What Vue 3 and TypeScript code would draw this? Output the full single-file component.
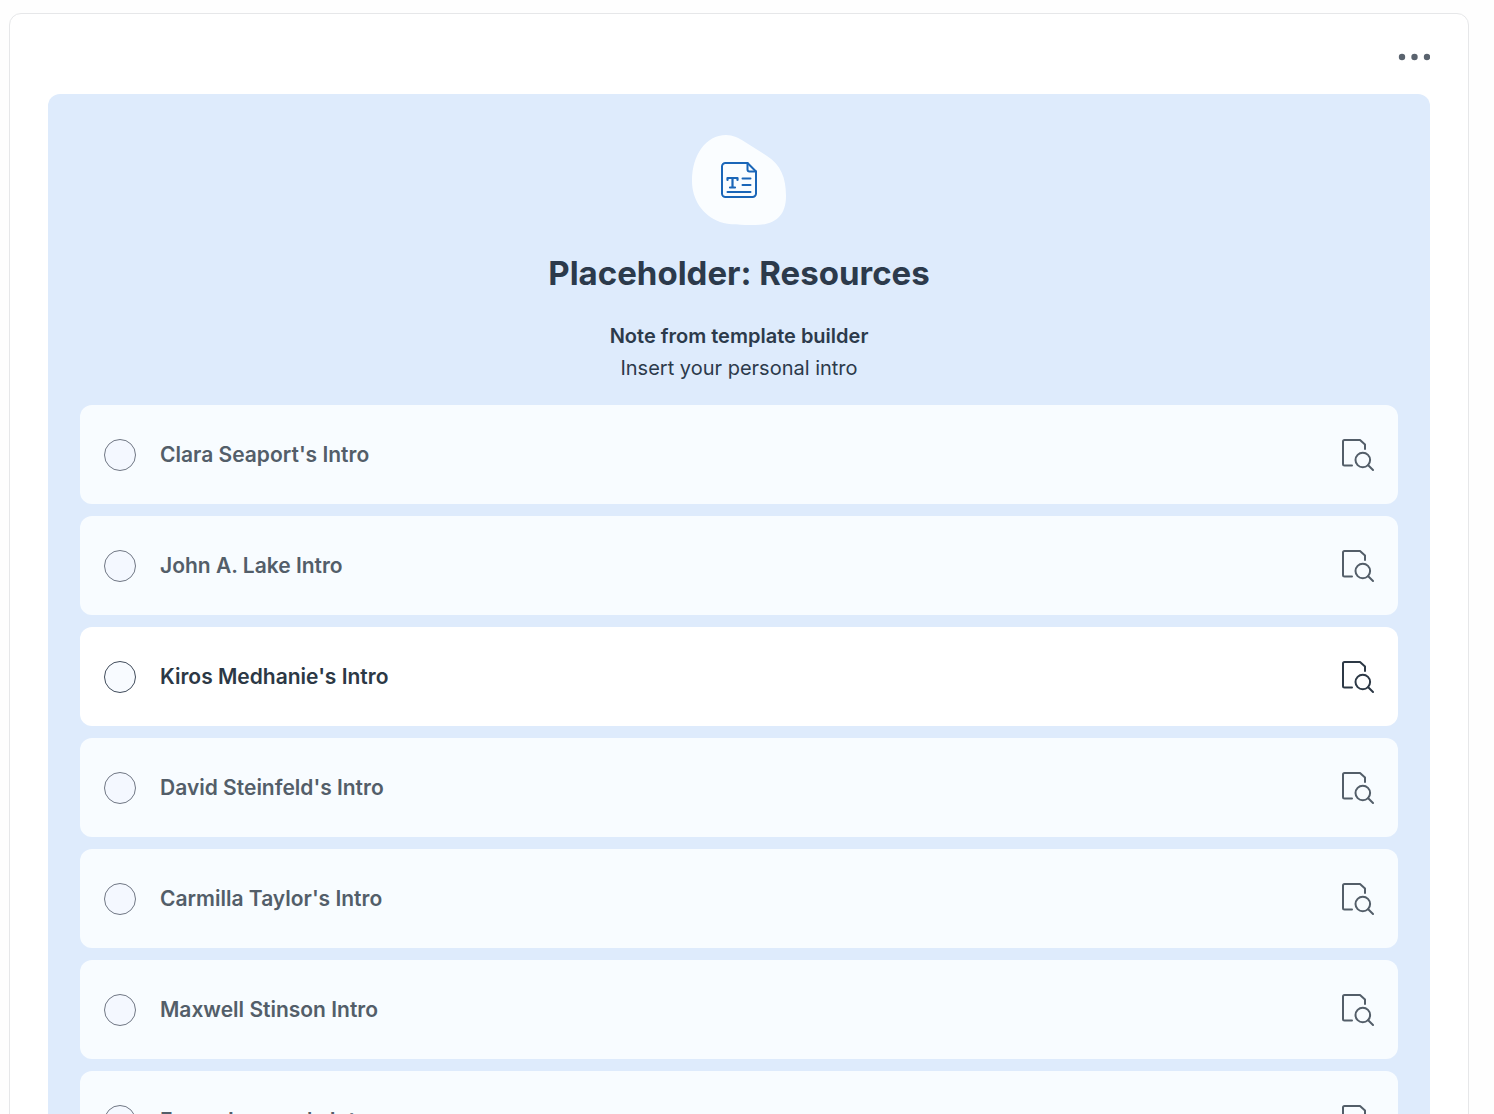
<script setup lang="ts">
import { ref } from 'vue'

interface Resource {
  id: string
  title: string
}

const resources: Resource[] = [
  { id: 'clara', title: "Clara Seaport's Intro" },
  { id: 'john', title: 'John A. Lake Intro' },
  { id: 'kiros', title: "Kiros Medhanie's Intro" },
  { id: 'david', title: "David Steinfeld's Intro" },
  { id: 'carmilla', title: "Carmilla Taylor's Intro" },
  { id: 'maxwell', title: 'Maxwell Stinson Intro' },
  { id: 'emma', title: "Emma Lawson's Intro" },
]

const highlighted = ref('kiros')
const selected = ref('')
</script>

<template>
  <main class="card">
    <header class="toolbar">
      <button class="more" type="button" aria-label="More options">
        <svg width="32" height="8" viewBox="0 0 32 8" fill="currentColor" aria-hidden="true">
          <circle cx="4" cy="4" r="3.2" />
          <circle cx="16.500" cy="4" r="3.2" />
          <circle cx="29" cy="4" r="3.2" />
        </svg>
      </button>
    </header>

    <section class="panel">
      <svg class="emblem" width="96" height="92" viewBox="0 0 96 92" fill="none" aria-hidden="true">
        <path
          d="M35 1C42 1 48 4 54 8L76 22C90 31 95 44 95 62C95 82 84 91 64 91C51 91 38 91 29 88C11 81 1 65 1 47C1 21 15 1 35 1Z"
          fill="#fafdff"
        />
        <g stroke="#1a66b8" stroke-width="2" stroke-linecap="round" stroke-linejoin="round">
          <path d="M56.500 29H34.500a3.500 3.500 0 0 0-3.500 3.500V59.500a3.500 3.500 0 0 0 3.500 3.500H61.500a3.500 3.500 0 0 0 3.500-3.500V37.500Z" />
          <path d="M56.500 29V35.500a2 2 0 0 0 2 2H65" />
          <path d="M36.500 46V44H46.500V46M41.500 44V53.500M39 53.500H44" stroke-width="2.200" />
          <path d="M51.500 44.500H59.500M51.500 51H59.500M36.500 58H59.500" />
        </g>
      </svg>

      <h1 class="title">Placeholder: Resources</h1>
      <p class="note-label">Note from template builder</p>
      <p class="note">Insert your personal intro</p>

      <ul class="list">
        <li
          v-for="item in resources"
          :key="item.id"
          class="row"
          :class="{ active: item.id === highlighted }"
          @mouseenter="highlighted = item.id"
        >
          <label class="choice">
            <input v-model="selected" class="radio" type="radio" name="resource" :value="item.id" />
            <span>{{ item.title }}</span>
          </label>
          <button class="preview" type="button" :aria-label="`Preview ${item.title}`">
            <svg
              width="34"
              height="34"
              viewBox="0 0 34 34"
              fill="none"
              stroke="currentColor"
              stroke-width="2"
              stroke-linecap="round"
              stroke-linejoin="round"
              aria-hidden="true"
            >
              <path d="M12 27.500H4.500a1.500 1.500 0 0 1-1.500-1.500V3.500a1.500 1.500 0 0 1 1.500-1.500H20L25 6.500V11" />
              <circle cx="22.800" cy="22" r="7.300" />
              <path d="M28.200 27.300L33 32" />
            </svg>
          </button>
        </li>
      </ul>
    </section>
  </main>
</template>

<style>
body {
  margin: 0;
  background: #fefefe;
}

html {
  scrollbar-width: none;
}
</style>

<style scoped>
.card {
  box-sizing: border-box;
  margin: 13px 25px 24px 9px;
  padding: 24px 38px 38px;
  border: 1px solid #e6e7e9;
  border-radius: 12px;
  background: #fff;
  color: #2c3a4b;
  font-family: Inter, "Liberation Sans", sans-serif;
}

.toolbar {
  display: flex;
  justify-content: flex-end;
  height: 56px;
}

.more {
  display: flex;
  align-items: center;
  height: 38px;
  padding: 0;
  border: 0;
  background: none;
  color: #5a636e;
  cursor: pointer;
}

.panel {
  display: flex;
  flex-direction: column;
  align-items: center;
  padding: 40px 32px 32px;
  border-radius: 12px;
  background: #deebfc;
}

.title {
  margin: 24px 0;
  font-size: 33px;
  font-weight: 700;
  line-height: 46px;
}

.note-label,
.note {
  margin: 0;
  font-size: 20px;
  line-height: 32px;
}

.note-label {
  font-weight: 600;
}

.list {
  display: flex;
  flex-direction: column;
  gap: 12px;
  align-self: stretch;
  margin: 21px 0 0;
  padding: 0;
  list-style: none;
}

.row {
  display: flex;
  align-items: center;
  justify-content: space-between;
  box-sizing: border-box;
  min-height: 99px;
  padding: 0 24px;
  border-radius: 12px;
  background: #f8fcff;
  color: #535e69;
}

.row.active {
  background: #fff;
  color: #2c3845;
}

.choice {
  display: flex;
  flex: 1;
  align-items: center;
  gap: 24px;
  font-size: 21px;
  font-weight: 600;
  line-height: 32px;
  cursor: pointer;
}

.radio {
  appearance: none;
  flex: none;
  width: 32px;
  height: 32px;
  margin: 0;
  border: 1px solid #707784;
  border-radius: 50%;
  background: #f4f8ff;
}

.active .radio {
  border-color: #414c5b;
  background: #f8fbff;
}

.radio:checked {
  border: 10px solid #1a66b8;
}

.preview {
  display: flex;
  padding: 0;
  border: 0;
  background: none;
  color: inherit;
  cursor: pointer;
}
</style>
